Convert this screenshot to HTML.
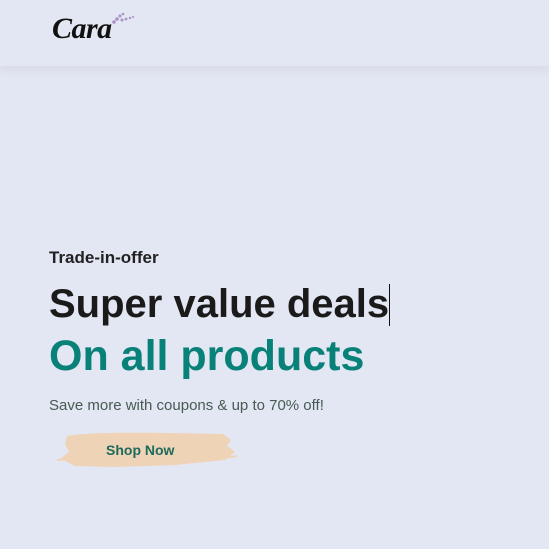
<!DOCTYPE html>
<html><head><style>
body{margin:0;width:549px;height:549px;background:#e3e6f3;font-family:"Liberation Sans",Arial,sans-serif;overflow:hidden;position:relative}
.hdr{position:absolute;left:0;top:0;width:549px;height:66px;background:#e3e6f3;box-shadow:0 4px 10px rgba(0,0,0,0.06)}
.logo{position:absolute;left:52px;top:12px;font-family:"Liberation Serif",serif;font-style:italic;font-weight:bold;font-size:30px;color:#111;letter-spacing:-0.5px}
.t{position:absolute;left:49px;color:#222;font-weight:bold;white-space:nowrap}
</style></head><body>
<div class="hdr">
<div class="logo">Cara</div>
<svg style="position:absolute;left:108px;top:10px" width="28" height="18"><g fill="#a893c9"><circle cx="6" cy="12" r="1.8"/><circle cx="9" cy="9" r="1.8"/><circle cx="12" cy="6" r="1.5"/><circle cx="15" cy="4" r="1.3"/><circle cx="14" cy="10" r="1.5"/><circle cx="18" cy="9" r="1.4"/><circle cx="22" cy="8" r="1.2"/><circle cx="25" cy="7" r="1"/></g></svg>
</div>
<div class="t" style="top:248px;font-size:17px">Trade-in-offer</div>
<div class="t" style="top:282px;font-size:40px;color:#1a1a1a">Super value deals</div>
<div style="position:absolute;left:389px;top:284px;width:1px;height:42px;background:#111"></div>
<div class="t" style="top:332px;font-size:43px;color:#088178">On all products</div>
<div class="t" style="top:397px;font-size:15px;font-weight:normal;color:#465b52">Save more with coupons &amp; up to 70% off!</div>
<svg style="position:absolute;left:55px;top:428px" width="185" height="45"><path d="M12 8 C40 3 120 5 168 6 L176 12 L172 18 L180 24 L170 32 L120 37 L60 39 L20 38 L12 34 L6 30 L14 24 L10 16 Z" fill="#efd3b6"/><path d="M2 32 L14 31 M168 30 L182 28" stroke="#efd3b6" stroke-width="2"/></svg>
<div class="t" style="left:106px;top:442px;font-size:14px;color:#1c6b5c">Shop Now</div>
</body></html>
